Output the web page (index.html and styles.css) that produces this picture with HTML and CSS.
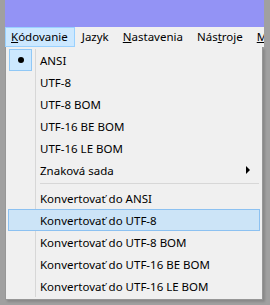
FILE: index.html
```html
<!DOCTYPE html>
<html lang="sk">
<head>
    <meta charset="UTF-8">
    <title>Kódovanie</title>
    <link rel="stylesheet" href="styles.css">
</head>
<body>
    <div class="window">
        <div class="title-bar"></div>
        <div class="menu-bar">
            <span class="menu-item active"><u>K</u>ódovanie</span>
            <span class="menu-item"><u>J</u>azyk</span>
            <span class="menu-item"><u>N</u>astavenia</span>
            <span class="menu-item">Nás<u>t</u>roje</span>
            <span class="menu-item"><u>M</u></span>
        </div>
        <div class="dropdown">
            <div class="row checked"><span class="check"><span class="dot"></span></span><span class="label">ANSI</span></div>
            <div class="row"><span class="check"></span><span class="label">UTF-8</span></div>
            <div class="row"><span class="check"></span><span class="label">UTF-8 BOM</span></div>
            <div class="row"><span class="check"></span><span class="label">UTF-16 BE BOM</span></div>
            <div class="row"><span class="check"></span><span class="label">UTF-16 LE BOM</span></div>
            <div class="row"><span class="check"></span><span class="label">Znaková sada</span><span class="arrow"></span></div>
            <div class="separator"></div>
            <div class="row"><span class="check"></span><span class="label">Konvertovať do ANSI</span></div>
            <div class="row hover"><span class="check"></span><span class="label">Konvertovať do UTF-8</span></div>
            <div class="row"><span class="check"></span><span class="label">Konvertovať do UTF-8 BOM</span></div>
            <div class="row"><span class="check"></span><span class="label">Konvertovať do UTF-16 BE BOM</span></div>
            <div class="row"><span class="check"></span><span class="label">Konvertovať do UTF-16 LE BOM</span></div>
        </div>
    </div>
</body>
</html>
```

FILE: styles.css
```css
body {
    margin: 0;
    padding: 0;
    background-color: #a0a0a0;
    font-family: "Noto Sans", Arial, sans-serif;
    font-size: 11.5px;
    color: #000;
    overflow: hidden;
}

.window {
    margin-left: 5px;
    width: 259px;
    height: 305px;
}

.title-bar {
    height: 27px;
    background-color: #9393f5;
}

.menu-bar {
    height: 20px;
    background-color: #f0f0f0;
    display: flex;
    white-space: nowrap;
    overflow: hidden;
}

.menu-item {
    padding: 0 6px 0 5px;
    line-height: 18px;
    border: 1px solid transparent;
    flex-shrink: 0;
}

.menu-item + .menu-item {
    padding: 0 6px 0 6px;
}

.menu-item.active {
    background-color: #cce8ff;
    border-color: #99d1ff;
}

.dropdown {
    width: 258px;
    height: 253px;
    border: 1px solid #979797;
    border-top: none;
    background-color: #f0f0f0;
    padding: 2px;
    box-sizing: border-box;
    position: relative;
    box-shadow: 2px 2px 2px rgba(0, 0, 0, 0.15);
}

.dropdown::before {
    content: "";
    position: absolute;
    left: 29px;
    top: 2px;
    bottom: 2px;
    width: 1px;
    background-color: #d7d7d7;
}

.row {
    height: 22px;
    display: flex;
    align-items: center;
    border: 1px solid transparent;
    box-sizing: border-box;
    position: relative;
}

.row.hover {
    background-color: #cce4f7;
    border-color: #8cc1f1;
}

.check {
    width: 22px;
    height: 20px;
    margin-left: 1px;
    display: flex;
    align-items: center;
    justify-content: center;
    box-sizing: border-box;
}

.checked .check {
    background-color: #cce8ff;
    border: 1px solid #90c8f6;
    height: 22px;
    margin-top: -1px;
    margin-bottom: -1px;
    margin-left: 0;
    width: 23px;
}

.dot {
    width: 6px;
    height: 6px;
    border-radius: 50%;
    background-color: #000;
}

.label {
    margin-left: 8px;
    flex: 1;
    white-space: nowrap;
}

.arrow {
    width: 0;
    height: 0;
    border-top: 4px solid transparent;
    border-bottom: 4px solid transparent;
    border-left: 4px solid #000;
    margin-right: 9px;
}

.separator {
    height: 6px;
    position: relative;
}

.separator::after {
    content: "";
    position: absolute;
    left: 32px;
    right: 1px;
    top: 2px;
    height: 1px;
    background-color: #d7d7d7;
}
```
